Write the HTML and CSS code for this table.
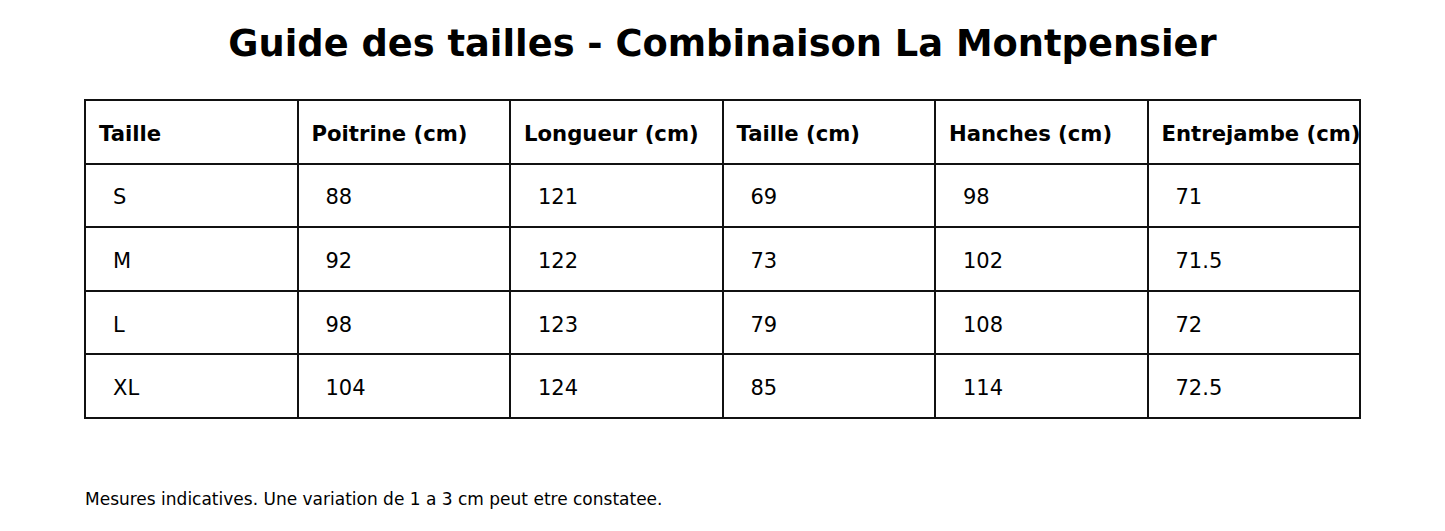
FILE: index.html
```html
<!DOCTYPE html>
<html lang="fr">
<head>
<meta charset="utf-8">
<title>Guide des tailles</title>
<link rel="stylesheet" href="styles.css">
</head>
<body>
<main class="page">
  <h1 class="title">Guide des tailles - Combinaison La Montpensier</h1>
  <div class="table">
    <div class="cell head">Taille</div>
    <div class="cell head">Poitrine (cm)</div>
    <div class="cell head">Longueur (cm)</div>
    <div class="cell head">Taille (cm)</div>
    <div class="cell head">Hanches (cm)</div>
    <div class="cell head">Entrejambe (cm)</div>

    <div class="cell">S</div><div class="cell">88</div><div class="cell">121</div><div class="cell">69</div><div class="cell">98</div><div class="cell">71</div>
    <div class="cell">M</div><div class="cell">92</div><div class="cell">122</div><div class="cell">73</div><div class="cell">102</div><div class="cell">71.5</div>
    <div class="cell">L</div><div class="cell">98</div><div class="cell">123</div><div class="cell">79</div><div class="cell">108</div><div class="cell">72</div>
    <div class="cell">XL</div><div class="cell">104</div><div class="cell">124</div><div class="cell">85</div><div class="cell">114</div><div class="cell">72.5</div>
  </div>
  <p class="note">Mesures indicatives. Une variation de 1 a 3 cm peut etre constatee.</p>
</main>
</body>
</html>
```

FILE: styles.css
```css
html, body {
  margin: 0;
  padding: 0;
  background: #fff;
}
body {
  font-family: "DejaVu Sans", sans-serif;
  color: #000;
}
.page {
  width: 1445px;
  height: 531px;
  padding: 0 85px;
  box-sizing: border-box;
  display: flex;
  flex-direction: column;
}
.title {
  margin: 22px 0 0;
  font-size: 36.8px;
  font-weight: bold;
  text-align: center;
  line-height: 44px;
}
.table {
  margin: 33px 0 0 -1px;
  display: grid;
  grid-template-columns: repeat(6, 212.5px);
  grid-auto-rows: 63.6px;
  border-top: 2px solid #111;
  border-left: 2px solid #111;
  width: 1277px;
  box-sizing: border-box;
}
.cell {
  border-right: 2px solid #111;
  border-bottom: 2px solid #111;
  display: flex;
  align-items: center;
  padding-left: 27px;
  font-size: 21px;
  white-space: nowrap;
  overflow: visible;
  padding-top: 4px;
}
.cell.head {
  font-weight: bold;
  font-size: 21.2px;
  padding-left: 13px;
}
.note {
  margin: 70px 0 0;
  font-size: 17px;
}
```
